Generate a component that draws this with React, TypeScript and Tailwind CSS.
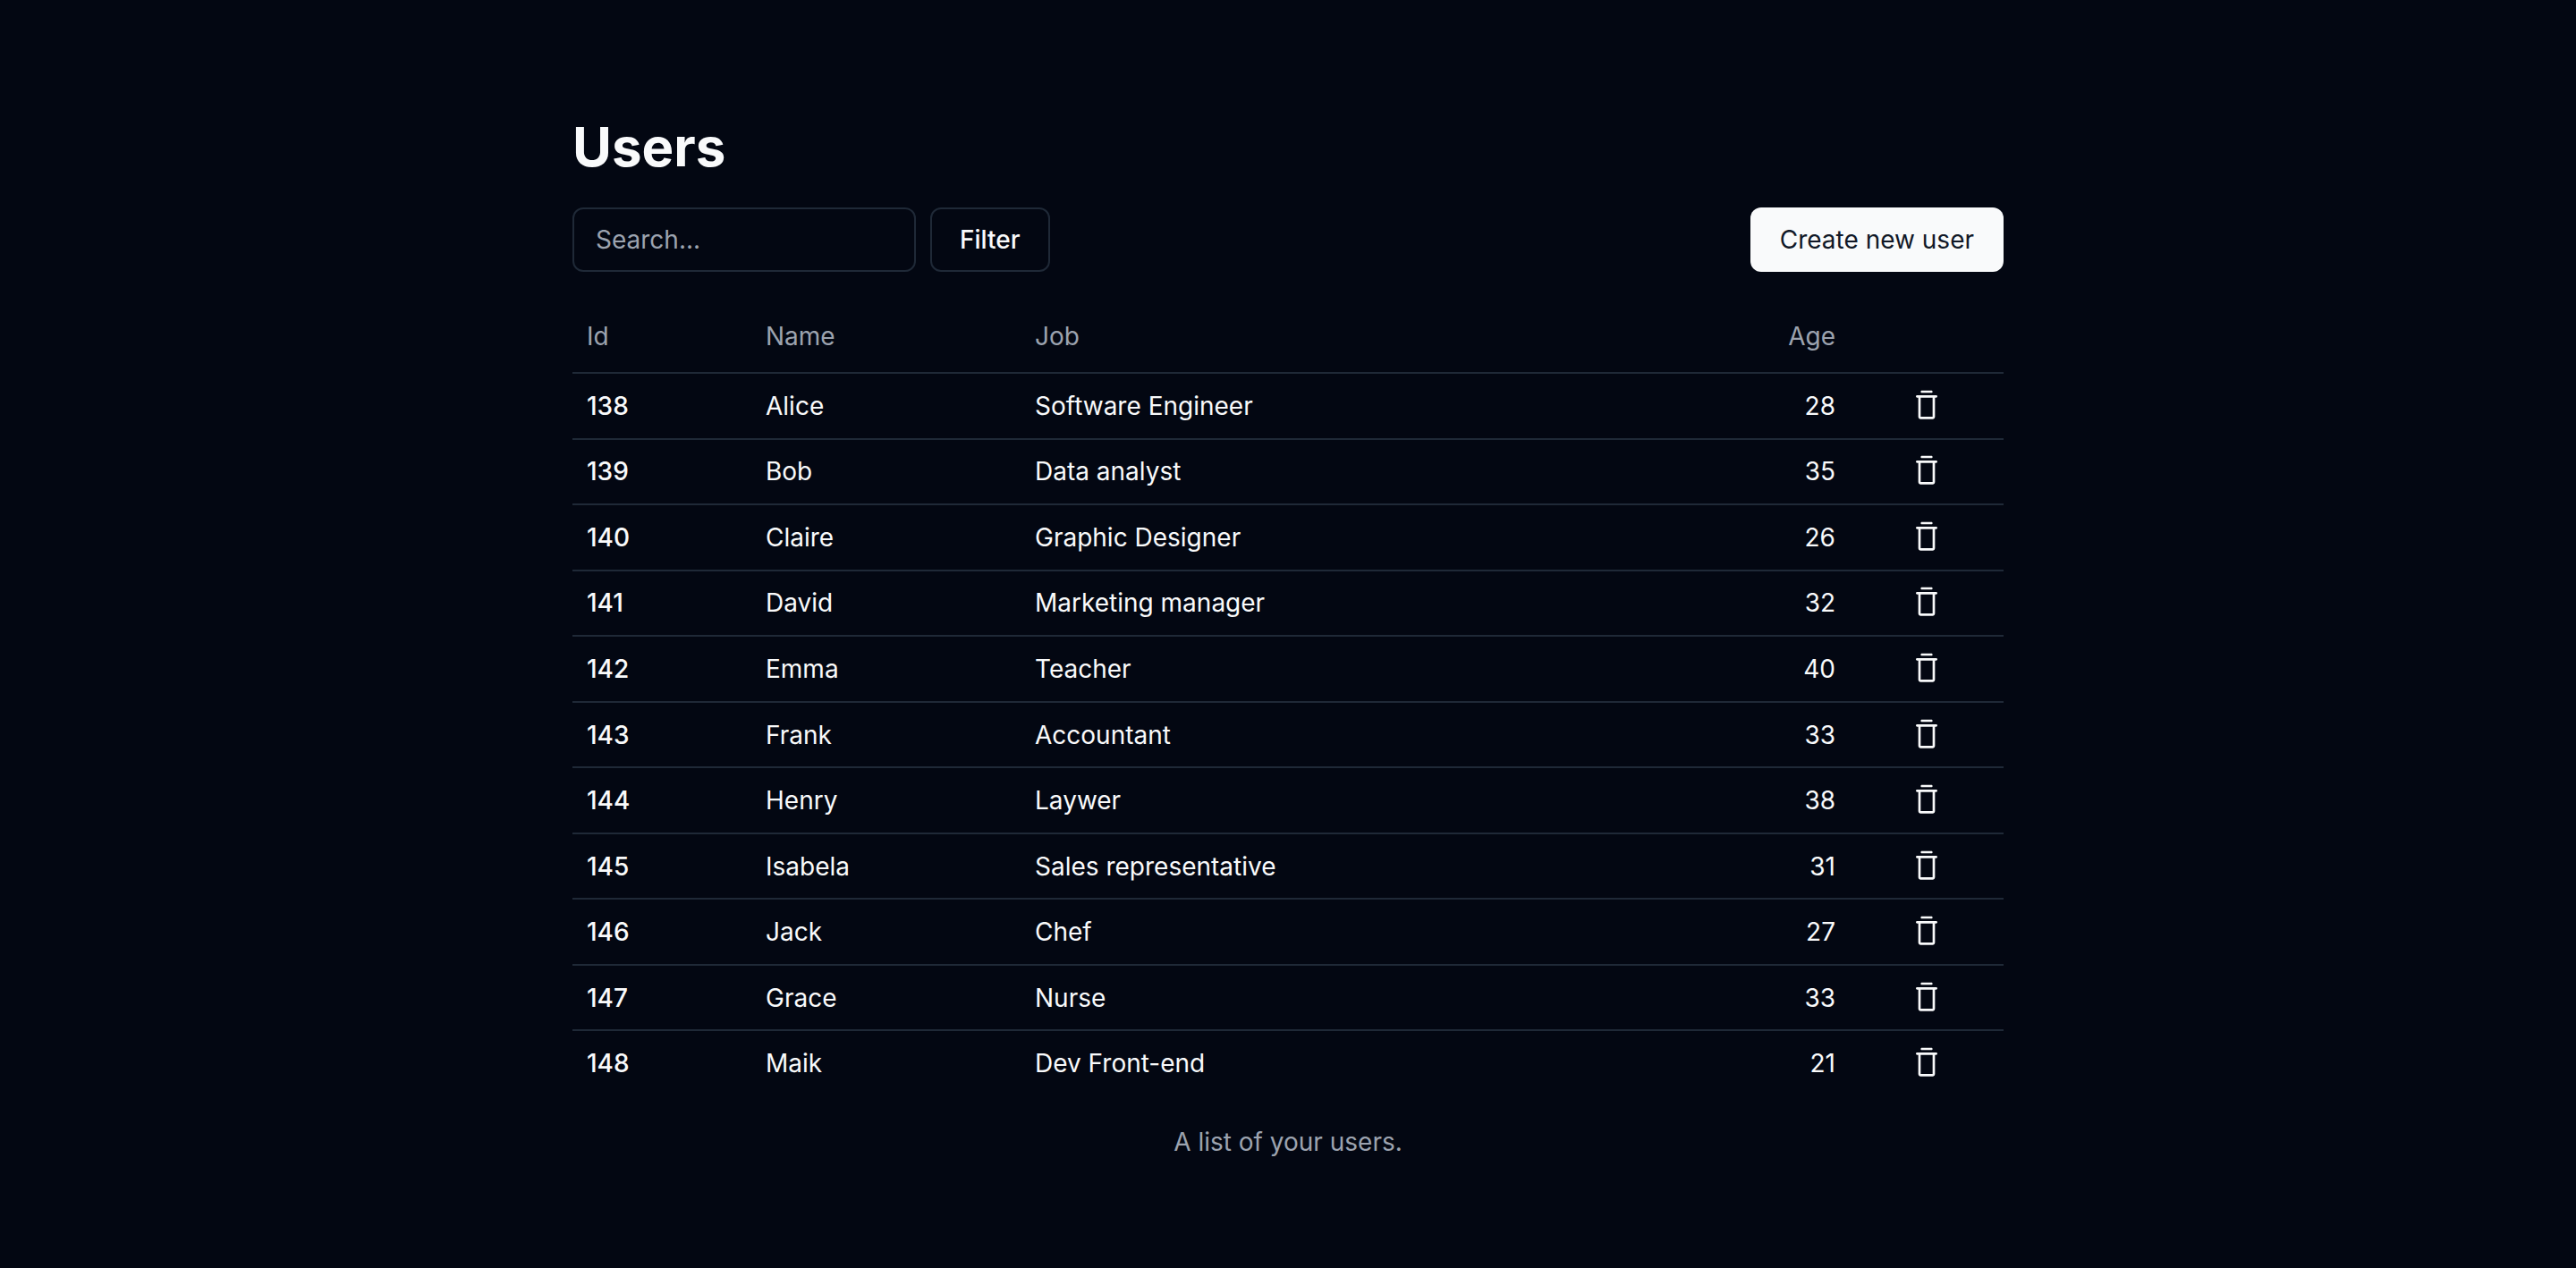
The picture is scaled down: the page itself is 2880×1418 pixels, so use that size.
import { RxTrash } from "react-icons/rx";

type User = { id: number; name: string; job: string; age: number };

const users: User[] = [
  { id: 138, name: "Alice", job: "Software Engineer", age: 28 },
  { id: 139, name: "Bob", job: "Data analyst", age: 35 },
  { id: 140, name: "Claire", job: "Graphic Designer", age: 26 },
  { id: 141, name: "David", job: "Marketing manager", age: 32 },
  { id: 142, name: "Emma", job: "Teacher", age: 40 },
  { id: 143, name: "Frank", job: "Accountant", age: 33 },
  { id: 144, name: "Henry", job: "Laywer", age: 38 },
  { id: 145, name: "Isabela", job: "Sales representative", age: 31 },
  { id: 146, name: "Jack", job: "Chef", age: 27 },
  { id: 147, name: "Grace", job: "Nurse", age: 33 },
  { id: 148, name: "Maik", job: "Dev Front-end", age: 21 },
];

function Toolbar() {
  return (
    <div className="flex items-center justify-between">
      <form className="flex items-center gap-4" onSubmit={(e) => e.preventDefault()}>
        <input
          type="search"
          aria-label="Search users"
          placeholder="Search..."
          className="h-18 w-96 rounded-xl border-2 border-[#1f2937] bg-transparent px-6 placeholder:text-[#9ca3af]"
        />
        <button
          type="submit"
          className="h-18 rounded-xl border-2 border-[#1f2937] px-[31px] font-medium"
        >
          Filter
        </button>
      </form>
      <button type="button" className="h-18 rounded-xl bg-[#f9fafb] px-[33px] text-[#111827]">
        Create new user
      </button>
    </div>
  );
}

function UserRow({ user }: { user: User }) {
  return (
    <tr className="border-b-2 border-[#1f2937] last:border-b-0">
      <td className="px-4 py-[15px] font-medium">{user.id}</td>
      <td className="px-4">{user.name}</td>
      <td className="px-4">{user.job}</td>
      <td className="px-4 text-right">{user.age}</td>
      <td className="px-4">
        <button type="button" aria-label={`Delete ${user.name}`} className="mx-auto block">
          <RxTrash size={40} />
        </button>
      </td>
    </tr>
  );
}

export default function App() {
  return (
    <div className="min-h-screen bg-[#030712] font-['Inter',sans-serif] text-[28px] leading-10 text-[#f9fafb]">
      <main className="mx-auto flex max-w-[1600px] flex-col gap-8 pt-32 pb-16">
        <h1 className="text-6xl leading-[72px] font-bold">Users</h1>
        <Toolbar />
        <table className="h-[889px] w-full table-fixed caption-bottom">
          <caption className="mt-8 text-[#9ca3af]">A list of your users.</caption>
          <colgroup>
            <col className="w-[200px]" />
            <col className="w-[301px]" />
            <col />
            <col className="w-[200px]" />
            <col className="w-[172px]" />
          </colgroup>
          <thead>
            <tr className="h-[81px] border-b-2 border-[#1f2937] text-[#9ca3af]">
              <th className="px-4 text-left font-normal">Id</th>
              <th className="px-4 text-left font-normal">Name</th>
              <th className="px-4 text-left font-normal">Job</th>
              <th className="px-4 text-right font-normal">Age</th>
              <td />
            </tr>
          </thead>
          <tbody>
            {users.map((user) => (
              <UserRow key={user.id} user={user} />
            ))}
          </tbody>
        </table>
      </main>
    </div>
  );
}
